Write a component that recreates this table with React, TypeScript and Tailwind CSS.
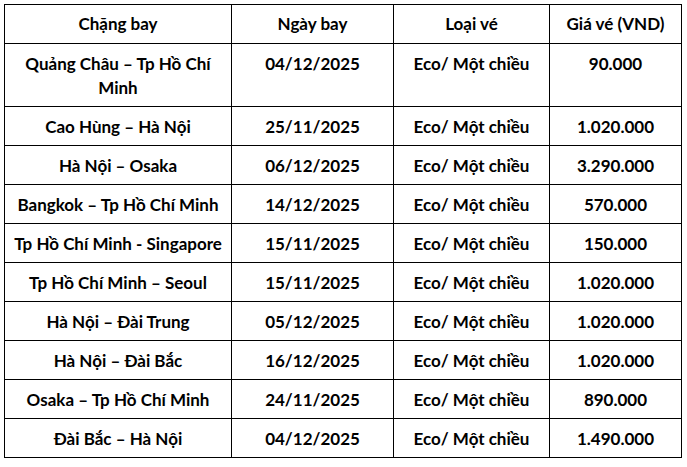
const ROWS = [
  ["Quảng Châu – Tp Hồ Chí Minh", "04/12/2025", "Eco/ Một chiều", "90.000"],
  ["Cao Hùng – Hà Nội", "25/11/2025", "Eco/ Một chiều", "1.020.000"],
  ["Hà Nội – Osaka", "06/12/2025", "Eco/ Một chiều", "3.290.000"],
  ["Bangkok – Tp Hồ Chí Minh", "14/12/2025", "Eco/ Một chiều", "570.000"],
  ["Tp Hồ Chí Minh - Singapore", "15/11/2025", "Eco/ Một chiều", "150.000"],
  ["Tp Hồ Chí Minh – Seoul", "15/11/2025", "Eco/ Một chiều", "1.020.000"],
  ["Hà Nội – Đài Trung", "05/12/2025", "Eco/ Một chiều", "1.020.000"],
  ["Hà Nội – Đài Bắc", "16/12/2025", "Eco/ Một chiều", "1.020.000"],
  ["Osaka – Tp Hồ Chí Minh", "24/11/2025", "Eco/ Một chiều", "890.000"],
  ["Đài Bắc – Hà Nội", "04/12/2025", "Eco/ Một chiều", "1.490.000"],
];

const HEAD = ["Chặng bay", "Ngày bay", "Loại vé", "Giá vé (VND)"];

export default function App() {
  return (
    <div className="w-[687px] h-[467px] bg-white pt-[4px] pl-[4px]">
      <table
        className="border-collapse table-fixed text-[17px] font-bold text-black leading-[24px]"
        style={{ fontFamily: "Lato, 'Liberation Sans', sans-serif" }}
      >
        <colgroup>
          <col className="w-[227px]" />
          <col className="w-[162px]" />
          <col className="w-[156px]" />
          <col className="w-[132px]" />
        </colgroup>
        <thead>
          <tr>
            {HEAD.map(h => (
              <th key={h} className="border border-black px-1 pt-[7px] pb-[7px] text-center align-top font-bold">
                {h}
              </th>
            ))}
          </tr>
        </thead>
        <tbody>
          {ROWS.map((r, i) => (
            <tr key={i}>
              {r.map((c, j) => (
                <td key={j} className="border border-black px-1 pt-[8px] pb-[6px] text-center align-top">
                  {c}
                </td>
              ))}
            </tr>
          ))}
        </tbody>
      </table>
    </div>
  );
}
